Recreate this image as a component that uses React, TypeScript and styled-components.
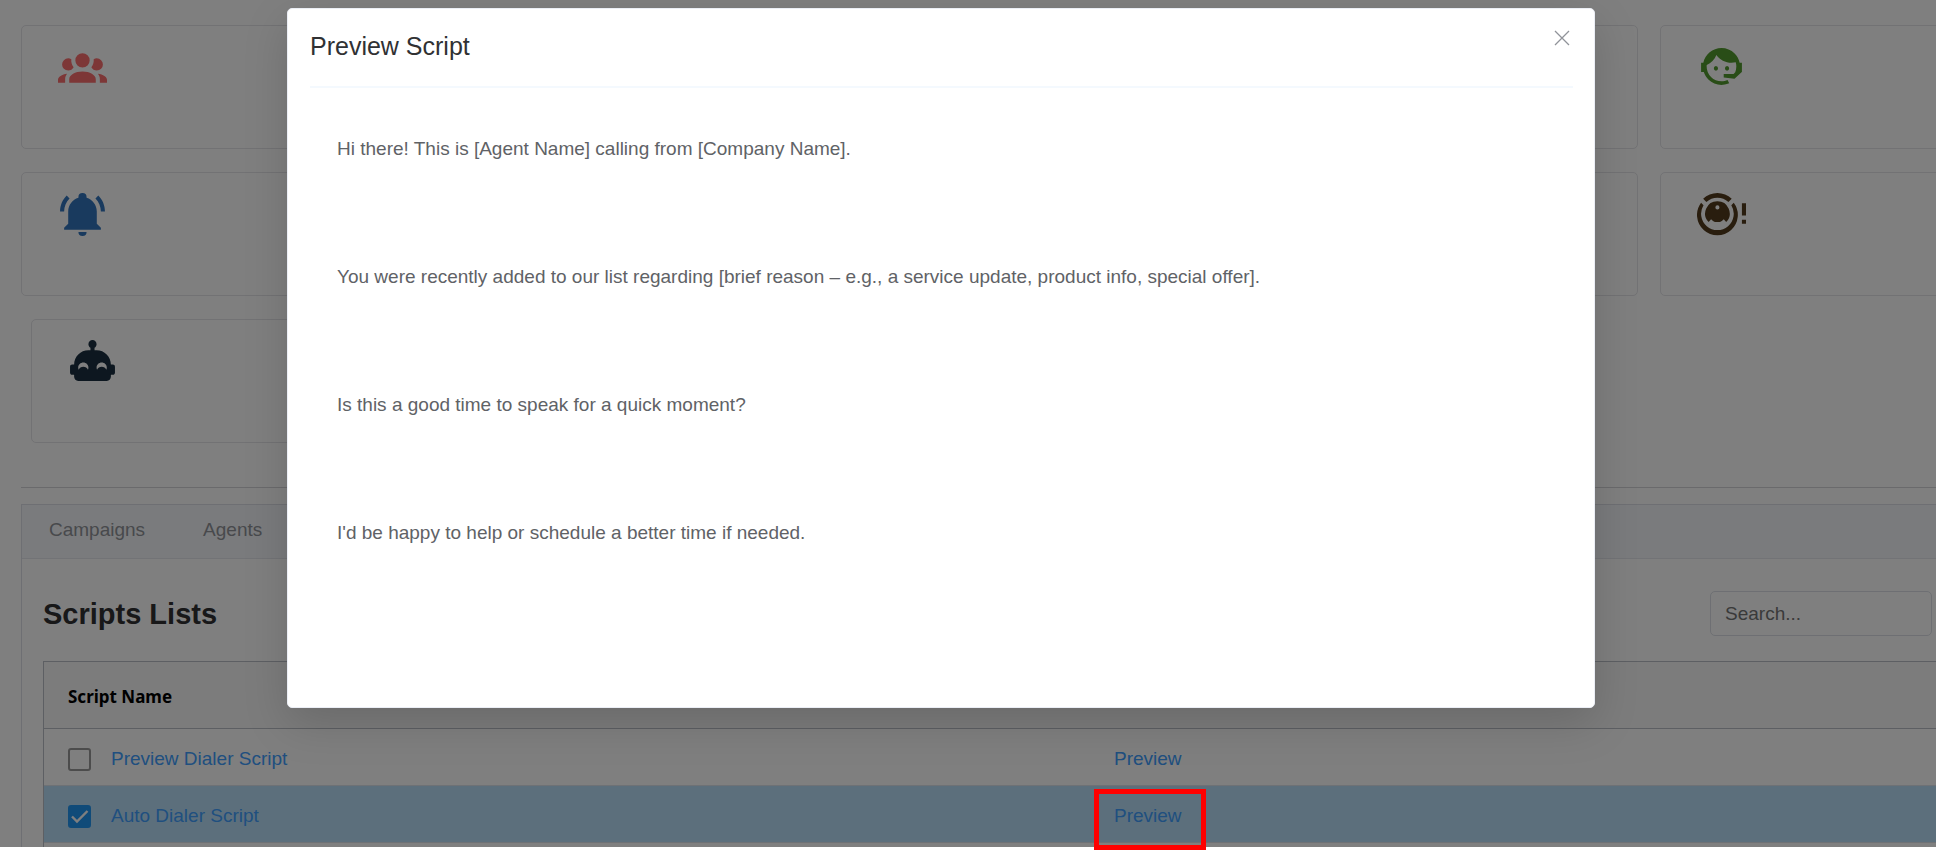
import React, { useState } from "react";
import styled, { createGlobalStyle } from "styled-components";

const GlobalStyle = createGlobalStyle`
  *, *::before, *::after { box-sizing: border-box; }
  html, body { margin: 0; background: #fff; overflow: hidden; }
  body { font-family: "Liberation Sans", Arial, sans-serif; font-size: 19px; color: #303133; }
  button, input { font: inherit; }
`;

const Root = styled.div`
  position: relative;
  height: 100vh;
  overflow: hidden;
`;

const Page = styled.div`
  position: relative;
  height: calc(100vh - 3px);
  overflow: hidden;
  padding: 25px 0 0 21px;
  background: #fff;
`;

const CardGrid = styled.section`
  display: grid;
  grid-template-columns: repeat(6, minmax(0, 1fr));
  gap: 23px 22px;
  margin: 0 -30px 44px 0;
`;

const Card = styled.article<{ $indent?: boolean }>`
  height: 124px;
  padding: 16px 36px;
  margin-left: ${(p) => (p.$indent ? "10px" : "0")};
  border: 1px solid #e4e4e8;
  border-radius: 5px;
`;

const CardIcon = styled.svg`
  display: block;
  width: 49px;
  height: 49px;
  fill: ${(p) => p.color};
`;

const Divider = styled.hr`
  margin: 0 0 16px;
  border: 0;
  border-top: 1px solid #d4d5d9;
`;

const Panel = styled.section`
  border: 1px solid #dcdfe6;
  border-right: 0;
`;

const TabBar = styled.nav`
  display: flex;
  height: 54px;
  padding: 0 27px 4px;
  gap: 58px;
  background: #f5f7fa;
  border-bottom: 1px solid #e4e7ed;
`;

const Tab = styled.button`
  padding: 0;
  border: 0;
  background: none;
  color: #909399;
  cursor: pointer;
`;

const Toolbar = styled.div`
  display: flex;
  align-items: center;
  justify-content: space-between;
  padding: 32px 4px 25px 21px;
`;

const Heading = styled.h2`
  margin: 0;
  font-size: 29px;
  line-height: 32px;
`;

const SearchInput = styled.input`
  width: 222px;
  height: 45px;
  padding: 0 14px;
  border: 1px solid #dcdfe6;
  border-radius: 5px;
  background: transparent;
  &::placeholder { color: #757575; }
`;

const TableWrap = styled.div`
  padding-left: 21px;
`;

const Table = styled.table`
  width: 100%;
  table-layout: fixed;
  border-collapse: separate;
  border-spacing: 0;
  border: 1px solid #babfc7;
  border-right: 0;
`;

const HeadCell = styled.th<{ $width: string }>`
  width: ${(p) => p.$width};
  height: 67px;
  padding: 4px 24px 0;
  background: #f9f9f9;
  border-bottom: 1px solid #babfc7;
  color: #000;
  font: 700 17px/24px "Noto Sans", sans-serif;
  text-align: left;
`;

const Row = styled.tr<{ $selected: boolean }>`
  background: ${(p) => (p.$selected ? "#b9dff8" : "transparent")};
`;

const Cell = styled.td`
  height: 57px;
  padding: 4px 24px 0;
  border-bottom: 1px solid #dde2eb;
`;

const NameGroup = styled.div`
  display: flex;
  align-items: center;
  gap: 20px;
`;

const CheckWrap = styled.span`
  position: relative;
  display: block;
  width: 23px;
  height: 23px;
  svg {
    position: absolute;
    inset: 0;
    pointer-events: none;
  }
`;

const Check = styled.input`
  display: block;
  width: 23px;
  height: 23px;
  margin: 0;
  appearance: none;
  border: 2px solid #999;
  border-radius: 3px;
  &:checked {
    background: #2196f3;
    border-color: #2196f3;
  }
`;

const Link = styled.a`
  color: #409eff;
  text-decoration: none;
`;

const Overlay = styled.div`
  position: absolute;
  inset: 0;
  padding: 8px 341px 0 287px;
  background: rgba(0, 0, 0, 0.5);
`;

const Dialog = styled.div`
  padding: 0 21px 0 22px;
  background: #fff;
  border: 1px solid #ebeef5;
  border-radius: 5px;
  box-shadow: 0 15px 45px rgba(0, 0, 0, 0.15);
`;

const DialogHeader = styled.header`
  display: flex;
  align-items: flex-start;
  justify-content: space-between;
  height: 79px;
  padding-top: 20px;
  border-bottom: 2px solid #f4f9fe;
`;

const DialogTitle = styled.h1`
  margin: 0;
  font-size: 25px;
  line-height: 34px;
  font-weight: 400;
`;

const CloseButton = styled.button`
  display: flex;
  padding: 1px 3px;
  border: 0;
  background: none;
  color: #909399;
  cursor: pointer;
`;

const DialogBody = styled.div`
  display: grid;
  gap: 98px;
  padding: 46px 27px 159px;
  color: #606266;
`;

const Paragraph = styled.p`
  margin: 0;
  line-height: 30px;
`;

const Highlight = styled.div`
  position: absolute;
  left: 1094px;
  bottom: 0;
  width: 112px;
  height: 61px;
  border: 5px solid #f00;
  pointer-events: none;
`;

const icons = {
  group: {
    color: "#fa6e6e",
    d: "M12,5.5A3.5,3.5 0 0,1 15.5,9A3.5,3.5 0 0,1 12,12.5A3.5,3.5 0 0,1 8.5,9A3.5,3.5 0 0,1 12,5.5M5,8C5.56,8 6.08,8.15 6.53,8.42C6.38,9.85 6.8,11.27 7.66,12.38C7.16,13.34 6.16,14 5,14A3,3 0 0,1 2,11A3,3 0 0,1 5,8M19,8A3,3 0 0,1 22,11A3,3 0 0,1 19,14C17.84,14 16.84,13.34 16.34,12.38C17.2,11.27 17.62,9.85 17.47,8.42C17.92,8.15 18.44,8 19,8M5.5,18.25C5.5,16.18 8.41,14.5 12,14.5C15.59,14.5 18.5,16.18 18.5,18.25V20H5.5V18.25M0,20V18.5C0,17.11 1.89,15.94 4.45,15.6C3.86,16.28 3.5,17.22 3.5,18.25V20H0M24,20H20.5V18.25C20.5,17.22 20.14,16.28 19.55,15.6C22.11,15.94 24,17.11 24,18.5V20Z",
  },
  bell: {
    color: "#3275bc",
    d: "M21,19V20H3V19L5,17V11C5,7.9 7.03,5.17 10,4.29C10,4.19 10,4.1 10,4A2,2 0 0,1 12,2A2,2 0 0,1 14,4C14,4.1 14,4.19 14,4.29C16.97,5.17 19,7.9 19,11V17L21,19M14,21A2,2 0 0,1 12,23A2,2 0 0,1 10,21M19.75,3.19L18.33,4.61C20.04,6.3 21,8.6 21,11H23C23,8.07 21.84,5.25 19.75,3.19M1,11H3C3,8.6 3.96,6.3 5.67,4.61L4.25,3.19C2.16,5.25 1,8.07 1,11Z",
  },
  agent: {
    color: "#529b2e",
    d: "M18.72,14.76C19.07,13.91 19.26,13 19.26,12C19.26,11.28 19.15,10.59 18.96,9.95C18.31,10.1 17.63,10.18 16.92,10.18C13.86,10.18 11.15,8.67 9.5,6.34C8.61,8.5 6.91,10.26 4.77,11.22C4.73,11.47 4.73,11.74 4.73,12A7.27,7.27 0 0,0 12,19.27C13.05,19.27 14.06,19.04 14.97,18.63C15.54,19.72 15.8,20.26 15.78,20.26C14.14,20.81 12.87,21.08 12,21.08C9.58,21.08 7.27,20.13 5.57,18.42C4.53,17.38 3.76,16.11 3.33,14.73H2V10.18H3.09C3.93,6.04 7.6,2.92 12,2.92C14.4,2.92 16.71,3.87 18.42,5.58C19.69,6.84 20.54,8.45 20.89,10.18H22V14.73H21.94L18.38,18L13.08,17.4V15.73H17.91L18.72,14.76M9.27,11.77A1.14,1.14 0 0,1 9.27,14.04A1.14,1.14 0 0,1 9.27,11.77M14.72,11.77A1.14,1.14 0 0,1 14.72,14.04A1.14,1.14 0 0,1 14.72,11.77Z",
  },
  robot: {
    color: "#1a2f40",
    d: "M22 14H21C21 10.13 17.87 7 14 7H13V5.73C13.6 5.39 14 4.74 14 4C14 2.9 13.11 2 12 2S10 2.9 10 4C10 4.74 10.4 5.39 11 5.73V7H10C6.13 7 3 10.13 3 14H2C1.45 14 1 14.45 1 15V18C1 18.55 1.45 19 2 19H3V20C3 21.11 3.9 22 5 22H19C20.11 22 21 21.11 21 20V19H22C22.55 19 23 18.55 23 18V15C23 14.45 22.55 14 22 14M9.79 16.5C9.4 15.62 8.53 15 7.5 15S5.6 15.62 5.21 16.5C5.08 16.19 5 15.86 5 15.5C5 14.12 6.12 13 7.5 13S10 14.12 10 15.5C10 15.86 9.92 16.19 9.79 16.5M18.79 16.5C18.4 15.62 17.5 15 16.5 15S14.6 15.62 14.21 16.5C14.08 16.19 14 15.86 14 15.5C14 14.12 15.12 13 16.5 13S19 14.12 19 15.5C19 15.86 18.92 16.19 18.79 16.5Z",
  },
  alert: {
    color: "#533b1c",
    d: "M10 2C12.6 2 15.1 3 17 4.8L15.4 6.4A8 8 0 0 0 4.6 6.4L3 4.8C4.9 3 7.4 2 10 2M2 6.7L3.2 7.9A8 8 0 1 0 16.8 7.9L18 6.7A10 10 0 1 1 2 6.7M10 6A6 6 0 0 1 14.3 16.2L13.1 14.8L12.3 15.5C11.6 16.2 10.8 16.2 10 16.2C9.2 16.2 8.4 16.2 7.7 15.5L6.9 14.8L5.7 16.2A6 6 0 0 1 10 6M10 8A1 1 0 0 0 10 10A1 1 0 0 0 10 8M22 7H24V13H22ZM22 15H24V17H22Z",
  },
};

type IconName = keyof typeof icons;

const cards: (IconName | null)[] = [
  "group", null, null, null, null, "agent",
  "bell", null, null, null, null, "alert",
  "robot",
];

const scriptText = [
  "Hi there! This is [Agent Name] calling from [Company Name].",
  "You were recently added to our list regarding [brief reason – e.g., a service update, product info, special offer].",
  "Is this a good time to speak for a quick moment?",
  "I'd be happy to help or schedule a better time if needed.",
];

const scripts = ["Preview Dialer Script", "Auto Dialer Script"];

export default function App() {
  const [selected, setSelected] = useState(1);
  const [open, setOpen] = useState(true);

  return (
    <Root>
      <GlobalStyle />
      <Page>
        <CardGrid>
          {cards.map((name, i) => (
            <Card key={i} $indent={name === "robot"}>
              {name && (
                <CardIcon viewBox="0 0 24 24" color={icons[name].color} aria-hidden="true">
                  <path fillRule="evenodd" d={icons[name].d} />
                </CardIcon>
              )}
            </Card>
          ))}
        </CardGrid>
        <Divider />
        <Panel>
          <TabBar>
            <Tab type="button">Campaigns</Tab>
            <Tab type="button">Agents</Tab>
          </TabBar>
          <Toolbar>
            <Heading>Scripts Lists</Heading>
            <SearchInput type="text" placeholder="Search..." aria-label="Search scripts" />
          </Toolbar>
          <TableWrap>
            <Table>
              <thead>
                <tr>
                  <HeadCell $width="auto">Script Name</HeadCell>
                  <HeadCell $width="846px" aria-label="Actions" />
                </tr>
              </thead>
              <tbody>
                {scripts.map((name, i) => (
                  <Row key={name} $selected={selected === i}>
                    <Cell>
                      <NameGroup>
                        <CheckWrap>
                          <Check
                            type="checkbox"
                            aria-label={name}
                            checked={selected === i}
                            onChange={() => setSelected(i)}
                          />
                          {selected === i && (
                            <svg width="23" height="23" viewBox="0 0 23 23" fill="none" aria-hidden="true">
                              <path d="M4 11.5L9 16.5L19.5 6" stroke="#fff" strokeWidth="2.4" />
                            </svg>
                          )}
                        </CheckWrap>
                        <Link href="#">{name}</Link>
                      </NameGroup>
                    </Cell>
                    <Cell>
                      <Link href="#" onClick={() => setOpen(true)}>Preview</Link>
                    </Cell>
                  </Row>
                ))}
                <Row $selected={false}>
                  <Cell />
                  <Cell />
                </Row>
              </tbody>
            </Table>
          </TableWrap>
        </Panel>
        {open && (
          <Overlay>
            <Dialog role="dialog" aria-modal="true" aria-labelledby="dialog-title">
              <DialogHeader>
                <DialogTitle id="dialog-title">Preview Script</DialogTitle>
                <CloseButton type="button" aria-label="Close" onClick={() => setOpen(false)}>
                  <svg width="16" height="16" viewBox="0 0 16 16" fill="none" aria-hidden="true">
                    <path d="M1 1L15 15M15 1L1 15" stroke="currentColor" strokeWidth="1.3" />
                  </svg>
                </CloseButton>
              </DialogHeader>
              <DialogBody>
                {scriptText.map((line) => (
                  <Paragraph key={line}>{line}</Paragraph>
                ))}
              </DialogBody>
            </Dialog>
          </Overlay>
        )}
      </Page>
      <Highlight />
    </Root>
  );
}
